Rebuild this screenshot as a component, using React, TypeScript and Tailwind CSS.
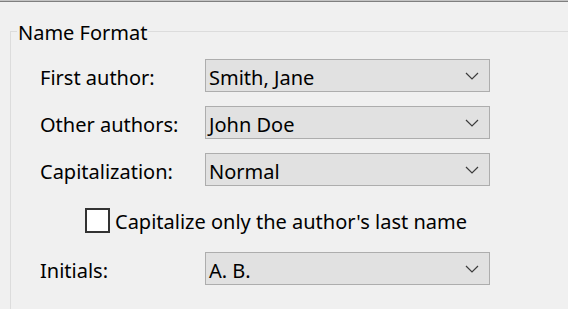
import React from 'react'

const font = { fontFamily: '"Segoe UI", "Noto Sans", "Liberation Sans", sans-serif' }

const Chevron = () => (
  <svg width="14" height="8" viewBox="0 0 14 8" className="shrink-0">
    <path d="M1 1 L7 7 L13 1" fill="none" stroke="#3c3c3c" strokeWidth="1.2" />
  </svg>
)

const Combo = ({ value }: { value: string }) => (
  <div className="flex h-[33px] w-[285px] items-center justify-between border border-[#adadad] bg-[#e1e1e1] pl-[3px] pr-[10px]">
    <span className="pt-[4px] text-[20px] leading-none text-black">{value}</span>
    <Chevron />
  </div>
)

const Row = ({ label, value }: { label: string; value: string }) => (
  <div className="flex items-center">
    <span className="w-[165px] pt-[4px] text-[20px] leading-none text-black">{label}</span>
    <Combo value={value} />
  </div>
)

export default function App() {
  return (
    <div className="h-[309px] w-[568px] overflow-hidden bg-[#f0f0f0]" style={font}>
      {/* window edge */}
      <div className="h-[1px] w-full bg-[#c4c4c4]" />
      <div className="h-[1px] w-full bg-[#7f7f7f]" />

      <fieldset className="mt-[17px] ml-[10px] h-[320px] w-[600px] border border-[#dcdcdc] p-0">
        <legend className="ml-[6px] px-[1px] pt-[4px] text-[20px] leading-[20px] text-black">Name Format</legend>

        <div className="flex flex-col pl-[29px] pt-[16px]">
          <Row label="First author:" value="Smith, Jane" />
          <div className="mt-[14px]">
            <Row label="Other authors:" value="John Doe" />
          </div>
          <div className="mt-[14px]">
            <Row label="Capitalization:" value="Normal" />
          </div>

          {/* checkbox */}
          <label className="mt-[22px] ml-[45px] flex items-center gap-[5px]">
            <span className="h-[25px] w-[25px] border-2 border-[#333] bg-white" />
            <span className="pt-[3px] text-[20px] leading-none text-black">Capitalize only the author's last name</span>
          </label>

          <div className="mt-[19px]">
            <Row label="Initials:" value="A. B." />
          </div>
        </div>
      </fieldset>
    </div>
  )
}
